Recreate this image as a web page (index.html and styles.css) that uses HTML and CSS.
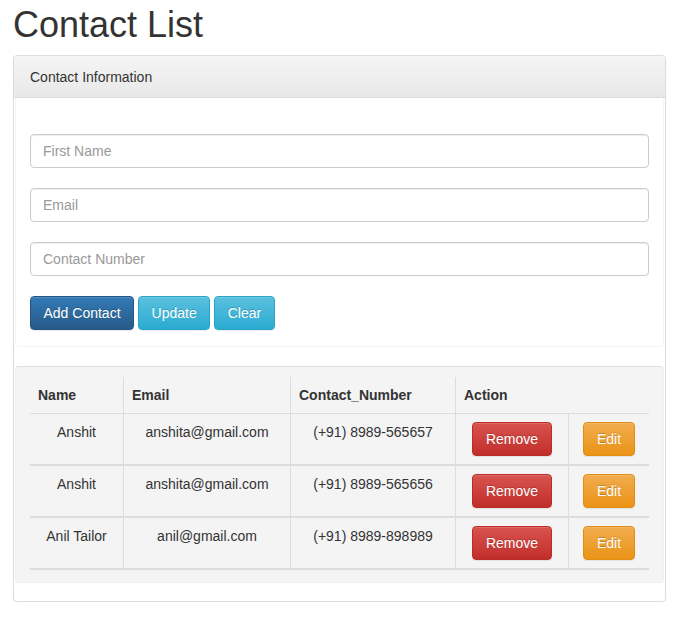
FILE: index.html
```html
<!DOCTYPE html>
<html lang="en">
<head>
<meta charset="utf-8">
<title>Contact List</title>
<link rel="stylesheet" href="styles.css">
</head>
<body>
<div class="page">
  <h1 class="title">Contact List</h1>
  <div class="panel">
    <div class="panel-heading">Contact Information</div>
    <div class="form-box">
      <input class="input" type="text" placeholder="First Name">
      <input class="input" type="text" placeholder="Email">
      <input class="input" type="text" placeholder="Contact Number">
      <div class="actions">
        <button class="btn btn-primary" type="button">Add Contact</button>
        <button class="btn btn-info" type="button">Update</button>
        <button class="btn btn-info" type="button">Clear</button>
      </div>
    </div>
    <div class="well">
      <table class="table">
        <colgroup>
          <col class="c-name">
          <col class="c-email">
          <col class="c-number">
          <col class="c-remove">
          <col class="c-edit">
        </colgroup>
        <thead>
          <tr>
            <th>Name</th>
            <th>Email</th>
            <th>Contact_Number</th>
            <th colspan="2">Action</th>
          </tr>
        </thead>
        <tbody>
          <tr>
            <td>Anshit</td>
            <td>anshita@gmail.com</td>
            <td>(+91) 8989-565657</td>
            <td><button class="btn btn-danger" type="button">Remove</button></td>
            <td><button class="btn btn-warning" type="button">Edit</button></td>
          </tr>
          <tr>
            <td>Anshit</td>
            <td>anshita@gmail.com</td>
            <td>(+91) 8989-565656</td>
            <td><button class="btn btn-danger" type="button">Remove</button></td>
            <td><button class="btn btn-warning" type="button">Edit</button></td>
          </tr>
          <tr>
            <td>Anil Tailor</td>
            <td>anil@gmail.com</td>
            <td>(+91) 8989-898989</td>
            <td><button class="btn btn-danger" type="button">Remove</button></td>
            <td><button class="btn btn-warning" type="button">Edit</button></td>
          </tr>
        </tbody>
      </table>
    </div>
  </div>
</div>
</body>
</html>
```

FILE: styles.css
```css
* {
  box-sizing: border-box;
}

body {
  margin: 0;
  background: #fff;
  color: #333;
  font-family: "Liberation Sans", Arial, Helvetica, sans-serif;
  font-size: 14px;
  line-height: 20px;
}

.page {
  width: 666px;
  padding-left: 13px;
}

.title {
  margin: 5px 0 10px;
  font-size: 36px;
  font-weight: 500;
  line-height: 40px;
  color: #333;
}

.panel {
  background: #fff;
  border: 1px solid #ddd;
  border-radius: 4px;
  box-shadow: 0 1px 2px rgba(0, 0, 0, 0.05);
}

.panel-heading {
  padding: 11px 15px 10px 16px;
  border-bottom: 1px solid #ddd;
  border-radius: 3px 3px 0 0;
  background: linear-gradient(to bottom, #f5f5f5 0, #e8e8e8 100%);
  color: #333;
}

.form-box {
  margin: 0 1px;
  padding: 36px 14px 16px;
  border: 1px solid #f4f4f4;
  border-top: 0;
  border-radius: 0 0 4px 4px;
}

.input {
  display: block;
  width: 100%;
  height: 34px;
  margin: 0 0 20px;
  padding: 6px 12px;
  border: 1px solid #ccc;
  border-radius: 4px;
  box-shadow: inset 0 1px 1px rgba(0, 0, 0, 0.075);
  background: #fff;
  color: #555;
  font: inherit;
}

.input::placeholder {
  color: #999;
  opacity: 1;
}

.actions {
  display: flex;
  gap: 4px;
}

.btn {
  display: inline-block;
  vertical-align: top;
  height: 34px;
  margin: 0;
  padding: 6px 12.5px;
  border: 1px solid transparent;
  border-radius: 4px;
  color: #fff;
  font: inherit;
  line-height: 20px;
  text-shadow: 0 -1px 0 rgba(0, 0, 0, 0.2);
  box-shadow: inset 0 1px 0 rgba(255, 255, 255, 0.15), 0 1px 1px rgba(0, 0, 0, 0.075);
  cursor: pointer;
}

.btn-primary {
  background: linear-gradient(to bottom, #337ab7 0, #265a88 100%);
  border-color: #245580;
}

.btn-info {
  background: linear-gradient(to bottom, #5bc0de 0, #2aabd2 100%);
  border-color: #28a4c9;
}

.btn-danger {
  background: linear-gradient(to bottom, #d9534f 0, #c12e2a 100%);
  border-color: #b92c28;
}

.btn-warning {
  background: linear-gradient(to bottom, #f0ad4e 0, #eb9316 100%);
  border-color: #e38d13;
}

.well {
  margin: 19px 1px 18px;
  padding: 10px 14px 12px;
  background: #f4f4f4;
  border: 1px solid #f0f0f0;
  border-top-color: #dedede;
  border-radius: 4px;
}

.table {
  width: 619px;
  table-layout: fixed;
  border-collapse: separate;
  border-spacing: 0;
}

.c-name { width: 93px; }
.c-email { width: 167px; }
.c-number { width: 165px; }
.c-remove { width: 113px; }
.c-edit { width: 81px; }

.table th {
  padding: 8px;
  text-align: left;
  font-weight: bold;
  vertical-align: bottom;
  border-bottom: 1px solid #ddd;
}

.table td {
  padding: 8px;
  text-align: center;
  vertical-align: top;
  border-bottom: 2px solid #ddd;
}

.table th + th,
.table td + td {
  border-left: 1px solid #ddd;
}
```
